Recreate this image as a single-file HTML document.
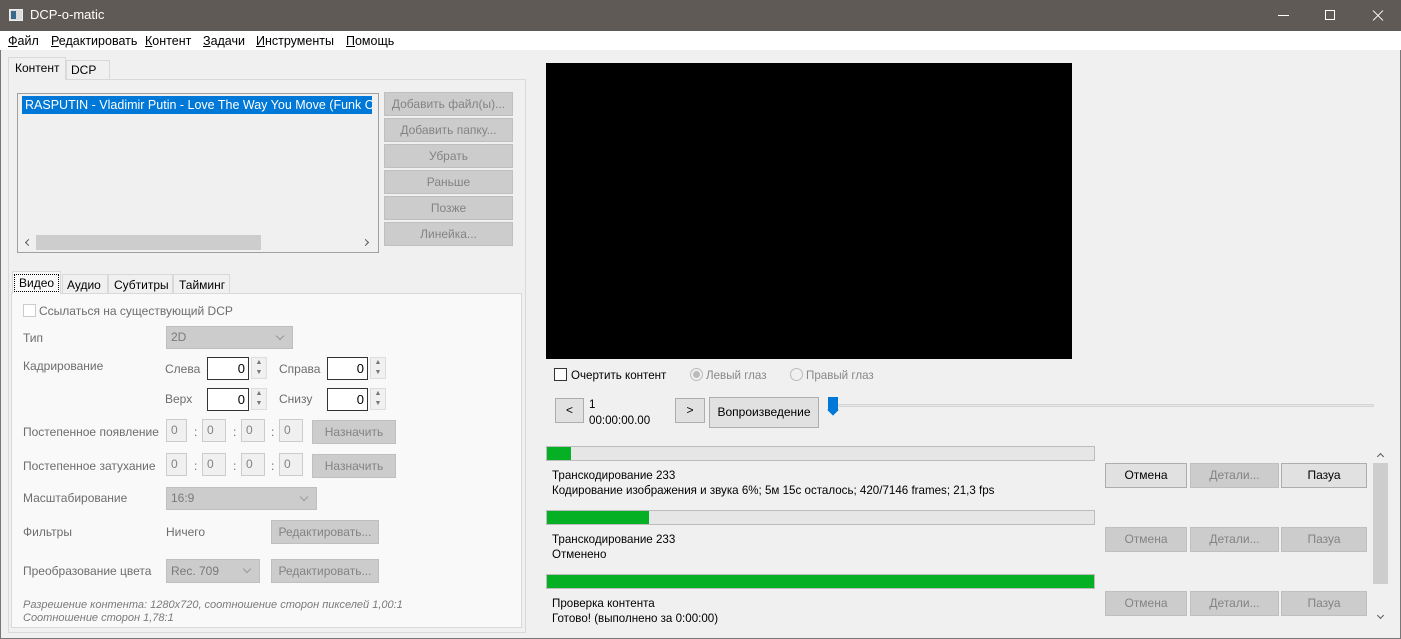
<!DOCTYPE html>
<html><head><meta charset="utf-8"><style>
*{box-sizing:border-box;margin:0;padding:0}
body{width:1401px;height:639px;background:#f0f0f0;font-family:"Liberation Sans",sans-serif;font-size:12px;color:#000;position:relative;overflow:hidden}
.a{position:absolute;white-space:nowrap}
.t{position:absolute;white-space:nowrap;line-height:14px}
.g{color:#6d6d6d}
.btn{position:absolute;background:#ccc;border:1px solid #bfbfbf;color:#838383;text-align:center;font-size:12px}
.btn.on{background:#e1e1e1;border-color:#adadad;color:#000}
.box{position:absolute;background:#f0f0f0;border:1px solid #ccc;color:#838383;font-size:12px;padding-left:4px}
.inp{position:absolute;background:#fff;border:1px solid #333;text-align:right;padding-right:3px;font-size:13px}
.sp{position:absolute;width:16px;height:22px;background:#f0f0f0;border:1px solid #ddd;font-size:7px;color:#777;text-align:center;line-height:10px}
.cmb{position:absolute;background:#ccc;border:1px solid #bfbfbf;color:#7a7a7a;padding-left:4px;font-size:12px}
.cmb:after{content:"";position:absolute;right:9px;top:6px;width:5px;height:5px;border-right:1px solid #999;border-bottom:1px solid #999;transform:rotate(45deg)}
.pb{position:absolute;left:546px;width:549px;height:15px;background:#e6e6e6;border:1px solid #bcbcbc}
.pb i{display:block;height:100%;background:#06b025}
.c{transform:scaleX(.965);transform-origin:left}
.m{position:absolute;top:34px;font-size:12.5px;line-height:14px}
.chev{position:absolute;width:5px;height:5px;border-left:1px solid #555;border-top:1px solid #555}
</style></head><body>
<div class="a" style="left:0;top:0;width:1401px;height:31px;background:#5f5a55"></div>
<div class="a" style="left:9px;top:9px;width:14px;height:12px;background:#dcdcdc;border:1px solid #eee"><div style="width:5px;height:8px;margin:1px;background:#3a6a8a"></div></div>
<div class="t" style="left:30px;top:8px;color:#fff;font-size:13px">DCP-o-matic</div>
<div class="a" style="left:1278px;top:15px;width:11px;height:1px;background:#fff"></div>
<div class="a" style="left:1325px;top:10px;width:10px;height:10px;border:1px solid #fff"></div>
<div class="a" style="left:1371px;top:15px;width:14px;height:1px;background:#fff;transform:rotate(45deg)"></div>
<div class="a" style="left:1371px;top:15px;width:14px;height:1px;background:#fff;transform:rotate(-45deg)"></div>
<div class="a" style="left:0;top:31px;width:1401px;height:19px;background:#fff"></div>
<div class="m" style="left:8px"><u>Ф</u>айл</div>
<div class="m" style="left:51px"><u>Р</u>едактировать</div>
<div class="m" style="left:145px"><u>К</u>онтент</div>
<div class="m" style="left:203px"><u>З</u>адачи</div>
<div class="m" style="left:256px"><u>И</u>нструменты</div>
<div class="m" style="left:346px"><u>П</u>омощь</div>
<div class="a" style="left:0;top:50px;width:1px;height:589px;background:#777"></div>
<div class="a" style="left:1400px;top:50px;width:1px;height:589px;background:#777"></div>
<div class="a" style="left:0;top:638px;width:1401px;height:1px;background:#777"></div>

<div class="a" style="left:8px;top:79px;width:518px;height:554px;border:1px solid #d9d9d9"></div>
<div class="a" style="left:8px;top:57px;width:58px;height:23px;background:#f0f0f0;border:1px solid #d9d9d9;border-bottom:none"></div>
<div class="t" style="left:15px;top:61px">Контент</div>
<div class="a" style="left:66px;top:60px;width:44px;height:19px;border:1px solid #d9d9d9;border-bottom:none"></div>
<div class="t" style="left:71px;top:63px">DCP</div>

<div class="a" style="left:17px;top:93px;width:362px;height:160px;border:1px solid #a0a0a0;background:#f0f0f0"></div>
<div class="a" style="left:22px;top:96px;width:350px;height:18px;background:#0078d7;color:#fff;overflow:hidden;padding:2px 3px;line-height:14px;font-size:12.5px">RASPUTIN - Vladimir Putin - Love The Way You Move (Funk Overload)</div>
<div class="a" style="left:18px;top:234px;width:360px;height:17px;background:#f0f0f0"></div>
<div class="a" style="left:36px;top:235px;width:225px;height:15px;background:#cdcdcd"></div>
<div class="chev" style="left:26px;top:240px;transform:rotate(-45deg)"></div>
<div class="chev" style="left:363px;top:240px;transform:rotate(135deg)"></div>
<div class="btn" style="left:384px;top:92px;width:129px;height:24px;line-height:22px">Добавить файл(ы)...</div>
<div class="btn" style="left:384px;top:118px;width:129px;height:24px;line-height:22px">Добавить папку...</div>
<div class="btn" style="left:384px;top:144px;width:129px;height:24px;line-height:22px">Убрать</div>
<div class="btn" style="left:384px;top:170px;width:129px;height:24px;line-height:22px">Раньше</div>
<div class="btn" style="left:384px;top:196px;width:129px;height:24px;line-height:22px">Позже</div>
<div class="btn" style="left:384px;top:222px;width:129px;height:24px;line-height:22px">Линейка...</div>

<div class="a" style="left:11px;top:293px;width:511px;height:335px;border:1px solid #d9d9d9;background:#f9f9f9"></div>
<div class="a" style="left:12px;top:271px;width:49px;height:23px;background:#f9f9f9;border:1px solid #d9d9d9;border-bottom:none"></div>
<div class="a" style="left:14px;top:274px;width:45px;height:18px;border:1px dotted #000"></div>
<div class="t" style="left:19px;top:276px">Видео</div>
<div class="a" style="left:62px;top:274px;width:46px;height:20px;border:1px solid #d9d9d9;border-bottom:none"></div>
<div class="t" style="left:67px;top:278px">Аудио</div>
<div class="a" style="left:108px;top:274px;width:65px;height:20px;border:1px solid #d9d9d9;border-bottom:none"></div>
<div class="t" style="left:114px;top:278px">Субтитры</div>
<div class="a" style="left:173px;top:274px;width:57px;height:20px;border:1px solid #d9d9d9;border-bottom:none"></div>
<div class="t" style="left:179px;top:278px">Тайминг</div>

<div class="a" style="left:23px;top:304px;width:13px;height:13px;border:1px solid #ccc;background:#fff"></div>
<div class="t g" style="left:39px;top:304px">Ссылаться на существующий DCP</div>
<div class="t g" style="left:23px;top:331px">Тип</div>
<div class="cmb" style="left:166px;top:326px;width:127px;height:23px;line-height:21px">2D</div>
<div class="t g" style="left:23px;top:359px">Кадрирование</div>
<div class="t g" style="left:165px;top:362px">Слева</div>
<div class="inp" style="left:207px;top:357px;width:42px;height:23px;line-height:21px">0</div>
<div class="sp" style="left:251px;top:357px">▲<br>▼</div>
<div class="t g" style="left:279px;top:362px">Справа</div>
<div class="inp" style="left:327px;top:357px;width:41px;height:23px;line-height:21px">0</div>
<div class="sp" style="left:370px;top:357px">▲<br>▼</div>
<div class="t g" style="left:165px;top:392px">Верх</div>
<div class="inp" style="left:207px;top:388px;width:42px;height:23px;line-height:21px">0</div>
<div class="sp" style="left:251px;top:388px">▲<br>▼</div>
<div class="t g" style="left:279px;top:392px">Снизу</div>
<div class="inp" style="left:327px;top:388px;width:41px;height:23px;line-height:21px">0</div>
<div class="sp" style="left:370px;top:388px">▲<br>▼</div>

<div class="t g" style="left:23px;top:425px">Постепенное появление</div>
<div class="box" style="left:166px;top:419px;width:21px;height:23px;line-height:20px">0</div>
<div class="t g" style="left:194px;top:425px">:</div>
<div class="box" style="left:202px;top:419px;width:24px;height:23px;line-height:20px">0</div>
<div class="t g" style="left:233px;top:425px">:</div>
<div class="box" style="left:241px;top:419px;width:24px;height:23px;line-height:20px">0</div>
<div class="t g" style="left:271px;top:425px">:</div>
<div class="box" style="left:279px;top:419px;width:24px;height:23px;line-height:20px">0</div>
<div class="btn" style="left:312px;top:420px;width:84px;height:24px;line-height:22px">Назначить</div>

<div class="t g" style="left:23px;top:459px">Постепенное затухание</div>
<div class="box" style="left:166px;top:453px;width:21px;height:23px;line-height:20px">0</div>
<div class="t g" style="left:194px;top:459px">:</div>
<div class="box" style="left:202px;top:453px;width:24px;height:23px;line-height:20px">0</div>
<div class="t g" style="left:233px;top:459px">:</div>
<div class="box" style="left:241px;top:453px;width:24px;height:23px;line-height:20px">0</div>
<div class="t g" style="left:271px;top:459px">:</div>
<div class="box" style="left:279px;top:453px;width:24px;height:23px;line-height:20px">0</div>
<div class="btn" style="left:312px;top:454px;width:84px;height:24px;line-height:22px">Назначить</div>

<div class="t g" style="left:23px;top:491px">Масштабирование</div>
<div class="cmb" style="left:166px;top:487px;width:151px;height:23px;line-height:21px">16:9</div>
<div class="t g" style="left:23px;top:525px">Фильтры</div>
<div class="t g" style="left:166px;top:525px">Ничего</div>
<div class="btn" style="left:271px;top:520px;width:108px;height:24px;line-height:22px">Редактировать...</div>
<div class="t g" style="left:23px;top:564px">Преобразование цвета</div>
<div class="cmb" style="left:166px;top:559px;width:94px;height:24px;line-height:22px">Rec. 709</div>
<div class="btn" style="left:271px;top:559px;width:108px;height:24px;line-height:22px">Редактировать...</div>
<div class="t g" style="left:23px;top:598px;font-size:11px;font-style:italic;color:#7a7a7a">Разрешение контента: 1280x720, соотношение сторон пикселей 1,00:1</div>
<div class="t g" style="left:23px;top:611px;font-size:11px;font-style:italic;color:#7a7a7a">Соотношение сторон 1,78:1</div>

<div class="a" style="left:546px;top:63px;width:526px;height:296px;background:#000"></div>
<div class="a" style="left:554px;top:368px;width:13px;height:13px;border:1px solid #333;background:#fff"></div>
<div class="t c" style="left:571px;top:368px">Очертить контент</div>
<div class="a" style="left:690px;top:368px;width:13px;height:13px;border:1px solid #bbb;border-radius:50%;background:#f0f0f0"><div style="width:7px;height:7px;margin:2px;border-radius:50%;background:#bbb"></div></div>
<div class="t c g" style="left:706px;top:368px;color:#888">Левый глаз</div>
<div class="a" style="left:790px;top:368px;width:13px;height:13px;border:1px solid #bbb;border-radius:50%;background:#f0f0f0"></div>
<div class="t c g" style="left:806px;top:368px;color:#888">Правый глаз</div>

<div class="btn on" style="left:555px;top:398px;width:29px;height:25px;line-height:23px">&lt;</div>
<div class="t c" style="left:589px;top:397px">1</div>
<div class="t c" style="left:589px;top:413px">00:00:00.00</div>
<div class="btn on" style="left:675px;top:398px;width:30px;height:25px;line-height:23px">&gt;</div>
<div class="btn on" style="left:709px;top:397px;width:110px;height:31px;line-height:29px">Вопроизведение</div>
<div class="a" style="left:830px;top:404px;width:544px;height:3px;background:#e7e7e7;border:1px solid #d6d6d6"></div>
<div class="a" style="left:828px;top:397px;width:10px;height:14px;background:#0078d7"></div>
<div class="a" style="left:829px;top:406px;width:8px;height:8px;background:#0078d7;transform:rotate(45deg)"></div>

<div class="pb" style="top:446px"><i style="width:24px"></i></div>
<div class="pb" style="top:510px"><i style="width:102px"></i></div>
<div class="pb" style="top:574px"><i style="width:100%"></i></div>
<div class="t c" style="left:552px;top:468px">Транскодирование 233</div>
<div class="t c" style="left:552px;top:483px">Кодирование изображения и звука 6%; 5м 15с осталось; 420/7146 frames; 21,3 fps</div>
<div class="t c" style="left:552px;top:532px">Транскодирование 233</div>
<div class="t c" style="left:552px;top:547px">Отменено</div>
<div class="t c" style="left:552px;top:596px">Проверка контента</div>
<div class="t c" style="left:552px;top:611px">Готово! (выполнено за 0:00:00)</div>

<div class="btn on" style="left:1105px;top:463px;width:82px;height:25px;line-height:23px">Отмена</div>
<div class="btn" style="left:1190px;top:463px;width:89px;height:25px;line-height:23px">Детали...</div>
<div class="btn on" style="left:1281px;top:463px;width:86px;height:25px;line-height:23px">Пазуа</div>
<div class="btn" style="left:1105px;top:527px;width:82px;height:25px;line-height:23px">Отмена</div>
<div class="btn" style="left:1190px;top:527px;width:89px;height:25px;line-height:23px">Детали...</div>
<div class="btn" style="left:1281px;top:527px;width:86px;height:25px;line-height:23px">Пазуа</div>
<div class="btn" style="left:1105px;top:591px;width:82px;height:25px;line-height:23px">Отмена</div>
<div class="btn" style="left:1190px;top:591px;width:89px;height:25px;line-height:23px">Детали...</div>
<div class="btn" style="left:1281px;top:591px;width:86px;height:25px;line-height:23px">Пазуа</div>
<div class="chev" style="left:1378px;top:454px;transform:rotate(45deg)"></div>
<div class="a" style="left:1373px;top:463px;width:15px;height:121px;background:#cdcdcd"></div>
<div class="chev" style="left:1378px;top:613px;transform:rotate(225deg)"></div>
</body></html>
